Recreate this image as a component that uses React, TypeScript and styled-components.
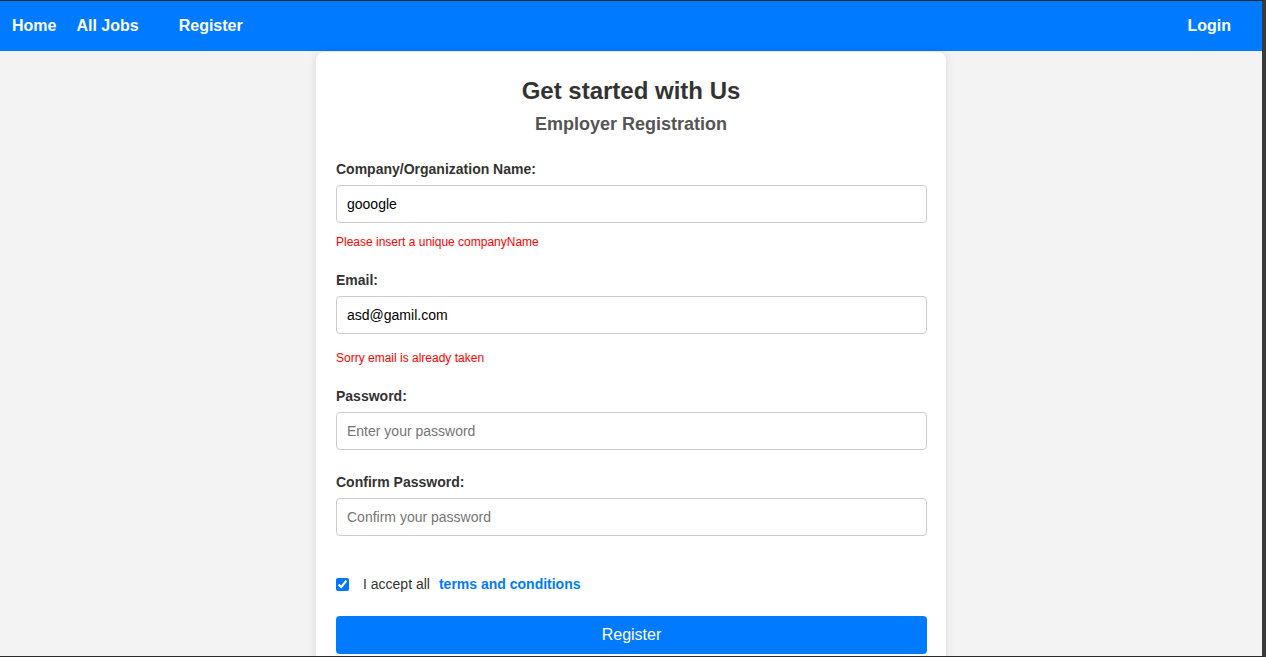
import React from "react";
import styled, { createGlobalStyle } from "styled-components";

const GlobalStyle = createGlobalStyle`
  html, body { margin: 0; padding: 0; }
  body { font-family: "Liberation Sans", Arial, sans-serif; background: #f2f2f2; }
  * { box-sizing: border-box; }
`;

const Frame = styled.div`
  width: 1266px;
  height: 657px;
  overflow: hidden;
  background: #f3f3f3;
  border-top: 1px solid #2b2b2b;
  border-right: 4px solid #3a3a3a;
  border-bottom: 1px solid #2b2b2b;
  display: flex;
  flex-direction: column;
`;

const NavBar = styled.nav`
  height: 50px;
  flex: none;
  background: #007bff;
  display: flex;
  align-items: center;
  padding: 0 31px 0 12px;
`;

const NavLink = styled.a<{ $gap?: number }>`
  color: #ffffff;
  font-weight: bold;
  font-size: 16px;
  text-decoration: none;
  margin-right: ${(p) => p.$gap ?? 0}px;
`;

const Spacer = styled.div`
  flex: 1;
`;

const Main = styled.main`
  flex: 1;
  display: flex;
  justify-content: center;
  padding-top: 1px;
`;

const Card = styled.section`
  width: 630px;
  background: #ffffff;
  border-radius: 8px;
  box-shadow: 0 0 10px rgba(0, 0, 0, 0.1);
  padding: 20px 20px 30px;
  height: 700px;
`;

const Title = styled.h2`
  margin: 5px 0 0;
  text-align: center;
  font-size: 24px;
  line-height: 28px;
  font-weight: bold;
  color: #333333;
`;

const Subtitle = styled.h3`
  margin: 8px 0 0;
  text-align: center;
  font-size: 18px;
  line-height: 22px;
  font-weight: bold;
  color: #555555;
`;

const Form = styled.form`
  margin-top: 26px;
  display: flex;
  flex-direction: column;
`;

const Group = styled.div<{ $mt: number }>`
  display: flex;
  flex-direction: column;
  margin-top: ${(p) => p.$mt}px;
`;

const Label = styled.label`
  font-size: 14px;
  line-height: 16px;
  font-weight: bold;
  color: #333333;
  margin-bottom: 8px;
`;

const Input = styled.input`
  width: 591px;
  height: 38px;
  border: 1px solid #cccccc;
  border-radius: 4px;
  padding: 0 10px;
  font-family: "Liberation Sans", Arial, sans-serif;
  font-size: 14px;
  color: #000000;
  background: #ffffff;
  outline: none;
  &::placeholder {
    color: #757575;
  }
`;

const ErrorText = styled.p<{ $mt: number }>`
  margin: ${(p) => p.$mt}px 0 0;
  font-size: 12px;
  line-height: 14px;
  color: #ff0000;
`;

const CheckRow = styled.div`
  display: flex;
  align-items: center;
  margin-top: 40px;
  height: 16px;
  font-size: 14px;
  color: #333333;
`;

const Check = styled.input`
  width: 13px;
  height: 13px;
  margin: 0 14px 0 0;
  accent-color: #0075ff;
`;

const TermsLink = styled.a`
  margin-left: 9px;
  color: #007bff;
  font-weight: bold;
  text-decoration: none;
`;

const SubmitButton = styled.button`
  margin-top: 24px;
  width: 591px;
  height: 38px;
  border: none;
  border-radius: 4px;
  background: #007bff;
  color: #ffffff;
  font-family: "Liberation Sans", Arial, sans-serif;
  font-size: 16px;
`;

export default function App() {
  return (
    <>
      <GlobalStyle />
      <Frame>
        <NavBar>
          <NavLink href="#" $gap={20}>Home</NavLink>
          <NavLink href="#" $gap={40}>All Jobs</NavLink>
          <NavLink href="#">Register</NavLink>
          <Spacer />
          <NavLink href="#">Login</NavLink>
        </NavBar>
        <Main>
          <Card>
            <Title>Get started with Us</Title>
            <Subtitle>Employer Registration</Subtitle>
            <Form onSubmit={(e) => e.preventDefault()}>
              <Group $mt={0}>
                <Label>Company/Organization Name:</Label>
                <Input type="text" defaultValue="gooogle" />
                <ErrorText $mt={12}>Please insert a unique companyName</ErrorText>
              </Group>
              <Group $mt={23}>
                <Label>Email:</Label>
                <Input type="email" defaultValue="asd@gamil.com" />
                <ErrorText $mt={17}>Sorry email is already taken</ErrorText>
              </Group>
              <Group $mt={23}>
                <Label>Password:</Label>
                <Input type="password" placeholder="Enter your password" />
              </Group>
              <Group $mt={24}>
                <Label>Confirm Password:</Label>
                <Input type="password" placeholder="Confirm your password" />
              </Group>
              <CheckRow>
                <Check type="checkbox" defaultChecked />
                <span>I accept all</span>
                <TermsLink href="#">terms and conditions</TermsLink>
              </CheckRow>
              <SubmitButton type="submit">Register</SubmitButton>
            </Form>
          </Card>
        </Main>
      </Frame>
    </>
  );
}
